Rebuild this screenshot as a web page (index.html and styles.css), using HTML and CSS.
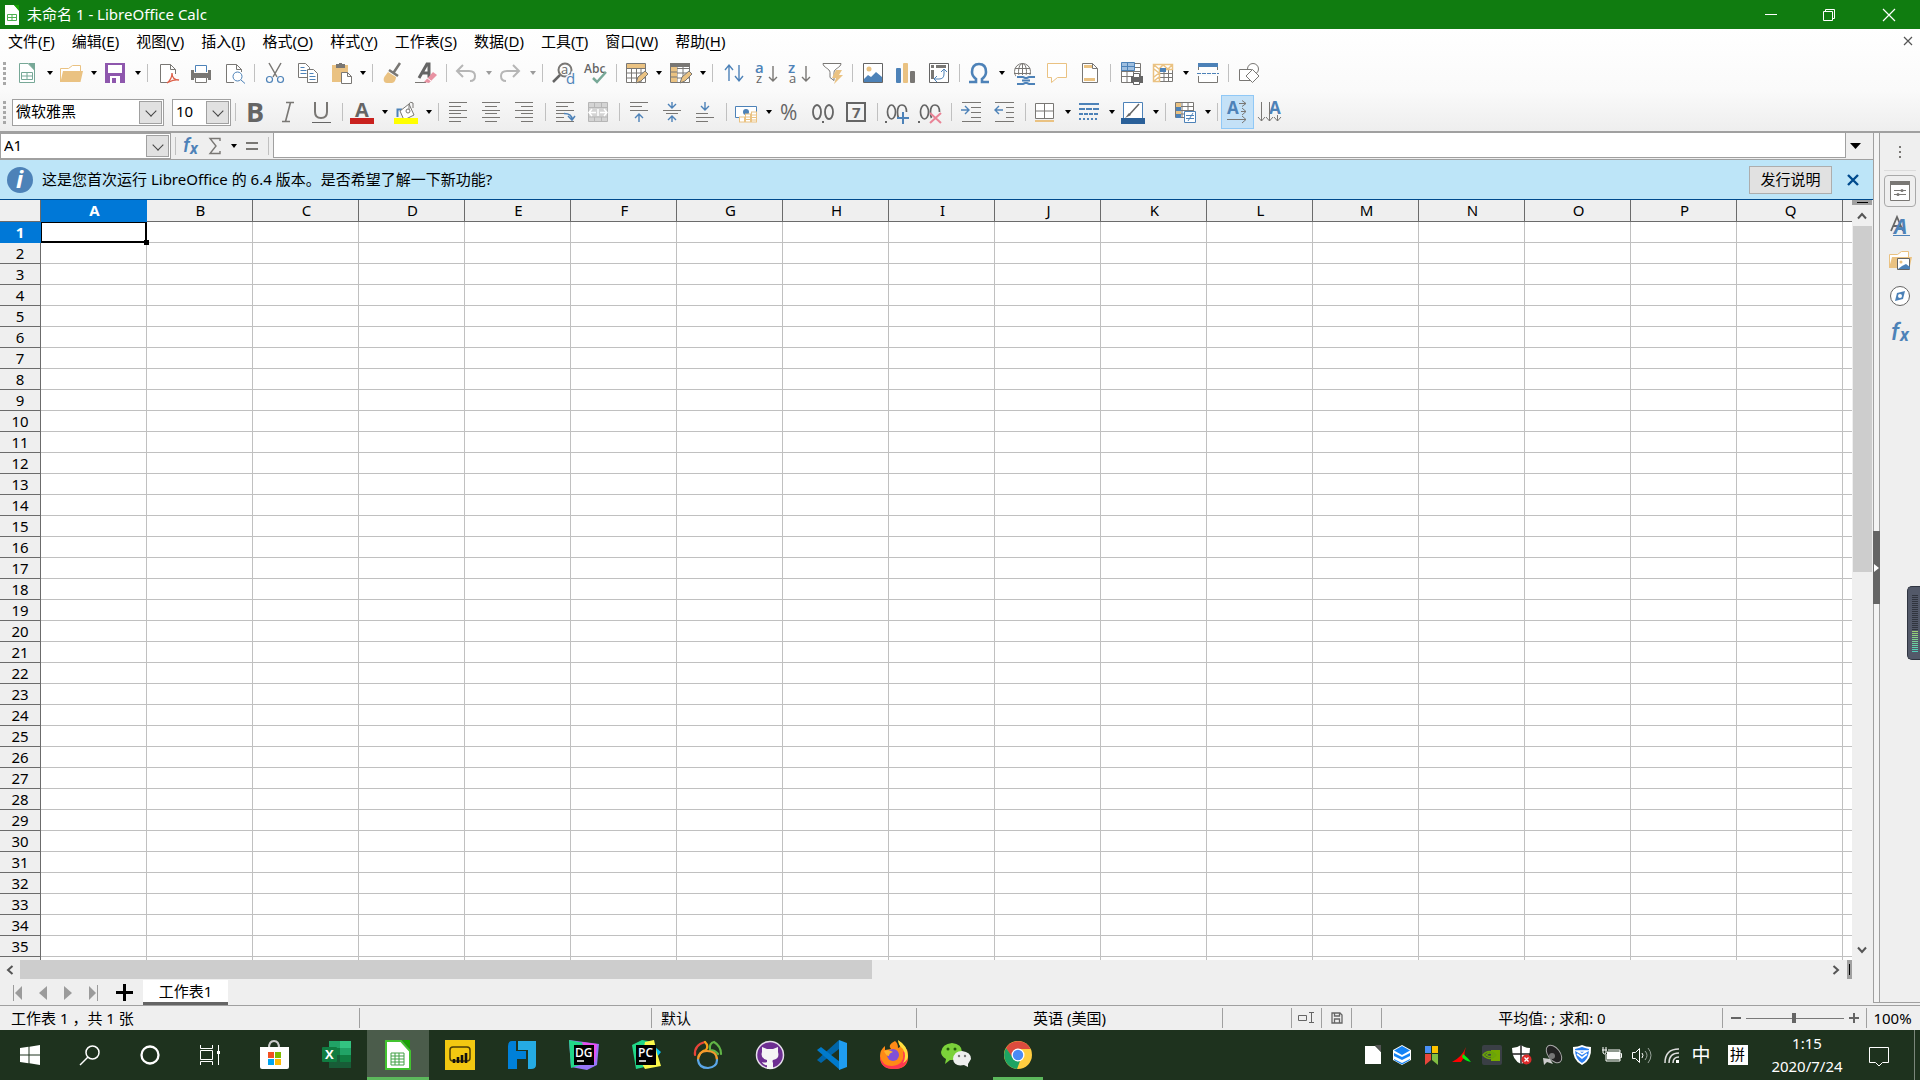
FILE: index.html
```html
<!DOCTYPE html>
<html lang="zh-CN">
<head>
<meta charset="utf-8">
<title>未命名 1 - LibreOffice Calc</title>
<link rel="stylesheet" href="styles.css">
</head>
<body>
<header class="titlebar">
  <svg class="app-icon" width="14" height="20" viewBox="0 0 14 20"><path d="M0 0h9l5 5v15H0z" fill="#fff"/><path d="M9 0h5v6z" fill="#18a303"/><path d="M2.500 9.500h9v6h-9zM2.500 12.500h9M7 9.500v6" stroke="#4caf50" fill="none"/></svg>
  <h1 class="title">未命名 1 - LibreOffice Calc</h1>
  <button class="win" aria-label="最小化"><svg width="12" height="12"><path d="M0 5.500h12" stroke="#fff"/></svg></button>
  <button class="win" aria-label="还原"><svg width="12" height="12"><path d="M.5 2.500h9v9h-9zM2.500 2.500v-2h9v9h-2" stroke="#fff" fill="none"/></svg></button>
  <button class="win" aria-label="关闭"><svg width="12" height="12"><path d="M0 0l12 12M12 0L0 12" stroke="#fff" stroke-width="1.200"/></svg></button>
</header>

<section class="chrome">
  <nav class="menubar">
    <button>文件(<u>F</u>)</button><button>编辑(<u>E</u>)</button><button>视图(<u>V</u>)</button><button>插入(<u>I</u>)</button><button>格式(<u>O</u>)</button><button>样式(<u>Y</u>)</button><button>工作表(<u>S</u>)</button><button>数据(<u>D</u>)</button><button>工具(<u>T</u>)</button><button>窗口(<u>W</u>)</button><button>帮助(<u>H</u>)</button>
    <button class="doc-close" aria-label="关闭文档"><svg width="8" height="8"><path d="M0 0l8 8M8 0L0 8" stroke="#555" stroke-width="1.200"/></svg></button>
  </nav>

  <div class="toolbar" role="toolbar" aria-label="标准">
    <span class="handle"></span>
    <button class="tb" aria-label="新建"><svg viewBox="0 0 24 24"><path d="M4.500 2.500H13l6.500 6.500v12.500h-15z" fill="#fff" stroke="#77a897"/><path d="M13 2h7v8z" fill="#77a897"/><path d="M6.500 11.500h11v7h-11zM6.500 15h11M12 11.500v7" fill="none" stroke="#77a897"/></svg></button><button class="dd" aria-label="新建选项"></button>
    <button class="tb" aria-label="打开"><svg viewBox="0 0 24 24"><path d="M1.500 21V7.500h8l4-3h8V10" fill="#fff" stroke="#eac282"/><path d="M4 10h20l-2.500 11H1.500z" fill="#eac282"/></svg></button><button class="dd" aria-label="打开选项"></button>
    <button class="tb" aria-label="保存"><svg viewBox="0 0 24 24"><path d="M2 2h20v20H2z" fill="#8e57ad"/><path d="M5 4h14v8H5zM7 15h10v7H7z" fill="#fff"/><path d="M9 17h4v5H9z" fill="#8e57ad"/></svg></button><button class="dd" aria-label="保存选项"></button>
    <span class="sep"></span>
    <button class="tb" aria-label="导出为 PDF"><svg viewBox="0 0 24 24"><path d="M13 21.500H5.500v-18h10l5 5V13M15.500 3.500v5h5" fill="#fff" stroke="#797774"/><path d="M12 22c4-3 5-8 5-10 0 4 2 7 7 7-6-1-8 1-12 3z" fill="none" stroke="#dd6049" stroke-width="1.300"/></svg></button>
    <button class="tb" aria-label="打印"><svg viewBox="0 0 24 24"><path d="M7.500 11V4.500h11V11" fill="#fff" stroke="#4d82b8"/><path d="M3 9h3v3h14V9h3v10h-3v-2H6v2H3z" fill="#797774"/><path d="M7.500 16.500h11v5h-11z" fill="#fff" stroke="#797774"/></svg></button>
    <button class="tb" aria-label="打印预览"><svg viewBox="0 0 24 24"><path d="M13 21.500H5.500v-18h10l5 5V11M15.500 3.500v5h5" fill="#fff" stroke="#797774"/><circle cx="16.500" cy="15.500" r="4.500" fill="#fff" stroke="#4d82b8"/><path d="M20 19l4 3.500" stroke="#4d82b8"/></svg></button>
    <span class="sep"></span>
    <button class="tb" aria-label="剪切"><svg viewBox="0 0 24 24"><path d="M7 2l8 14M19 2l-8 14" stroke="#797774" stroke-width="1.500"/><g fill="none" stroke="#4d82b8" stroke-width="1.200"><circle cx="7.500" cy="18.500" r="3"/><circle cx="18.500" cy="18.500" r="3"/></g></svg></button>
    <button class="tb" aria-label="复制"><svg viewBox="0 0 24 24"><g fill="#fff" stroke="#797774"><path d="M3.500 2.500h7l4 4v10h-11z"/><path d="M12.500 8.500h6l4 4v9h-10z"/></g><path d="M5.500 6.500h4M5.500 9.500h6M5.500 12.500h6M14.500 12.500h4M14.500 15.500h6M14.500 18.500h6" stroke="#4d82b8"/></svg></button>
    <button class="tb" aria-label="粘贴"><svg viewBox="0 0 24 24"><path d="M4 4h16v17H4z" fill="#eac282"/><path d="M8 3h3V2h3v1h3v4H8z" fill="#797774"/><path d="M13.500 11.500h6l4 4v7h-10zM19.500 11.500v4h4" fill="#fff" stroke="#797774"/></svg></button><button class="dd" aria-label="粘贴选项"></button>
    <span class="sep"></span>
    <button class="tb" aria-label="克隆格式"><svg viewBox="0 0 24 24"><path d="M20 2l-6 9M9 9l9 6" stroke="#797774" stroke-width="2.500"/><path d="M8 11l8 5c0 3-2 6-4 6H7c-4 0-4-5-2-7z" fill="#eac282"/></svg></button>
    <button class="tb" aria-label="清除格式"><svg viewBox="0 0 24 24"><path d="M6 17L14 3h2v14M8 12h8" fill="none" stroke="#656565" stroke-width="3"/><path d="M2 21.500h11" stroke="#797774"/><path d="M20 11l4 3-8 8-5-1z" fill="#e892a2"/><path d="M13 16l5 4" stroke="#fff"/></svg></button>
    <span class="sep"></span>
    <button class="tb off" aria-label="撤消"><svg viewBox="0 0 24 24"><path d="M9 4l-6 6 6 6M3 10h12q6 0 6 5t-5 5" fill="none" stroke="#b6b6b6" stroke-width="2"/></svg></button><button class="dd off" aria-label="撤消选项"></button>
    <button class="tb off" aria-label="重做"><svg viewBox="0 0 24 24"><path d="M15 4l6 6-6 6M21 10H9q-6 0-6 5t5 5" fill="none" stroke="#b6b6b6" stroke-width="2"/></svg></button><button class="dd off" aria-label="重做选项"></button>
    <span class="sep"></span>
    <button class="tb" aria-label="查找替换"><svg viewBox="0 0 24 24"><circle cx="15" cy="9" r="6.500" fill="none" stroke="#797774" stroke-width="2"/><path d="M10 14l-7 7" stroke="#656565" stroke-width="2.500"/><text x="11" y="13" font-size="13" fill="#656565">a</text><text x="16" y="23" font-size="15" fill="#4d82b8" stroke="#f9f9f9" stroke-width="3" paint-order="stroke">d</text></svg></button>
    <button class="tb" aria-label="拼写检查"><svg viewBox="0 0 24 24"><text x="1" y="12" font-size="12" font-weight="600" fill="#656565">Abc</text><path d="M10 17l4 4 9-10" fill="none" stroke="#77a897" stroke-width="2.500"/></svg></button>
    <span class="sep"></span>
    <button class="tb" aria-label="行"><svg viewBox="0 0 24 24"><path d="M2.500 2.500h19v19h-19zM2.500 7.500h19M2.500 12h19M2.500 17h19M7.500 2v20M12.500 2v20M17 2v20" fill="#fff" stroke="#797774"/><path d="M3 3h18v4H3z" fill="#eac282"/><path d="M12 22l2-6 7-6 3 3-7 7z" fill="#eac282" stroke="#797774"/></svg></button><button class="dd" aria-label="行选项"></button>
    <button class="tb" aria-label="列"><svg viewBox="0 0 24 24"><path d="M2.500 2.500h19v19h-19zM2.500 7.500h19M2.500 12h19M2.500 17h19M9 2v20M15 2v20" fill="#fff" stroke="#797774"/><path d="M2 2h20v4H2z" fill="#797774"/><path d="M3 6h6v15H3z" fill="#eac282"/><path d="M3 11h6M3 16h6" stroke="#797774"/><path d="M12 22l2-6 7-6 3 3-7 7z" fill="#eac282" stroke="#797774"/></svg></button><button class="dd" aria-label="列选项"></button>
    <span class="sep"></span>
    <button class="tb" aria-label="排序"><svg viewBox="0 0 24 24"><path d="M9 20V5M5 9l4-5 4 5M19 4v15M15 15l4 5 4-5" fill="none" stroke="#4d82b8" stroke-width="1.400"/></svg></button>
    <button class="tb" aria-label="升序"><svg viewBox="0 0 24 24"><text x="2" y="12" font-size="15" font-weight="600" fill="#4d82b8">a</text><text x="3" y="22" font-size="13" fill="#656565">z</text><path d="M20 5v15M16 16l4 4 4-4" fill="none" stroke="#797774" stroke-width="1.400"/></svg></button>
    <button class="tb" aria-label="降序"><svg viewBox="0 0 24 24"><text x="2" y="12" font-size="15" font-weight="600" fill="#4d82b8">z</text><text x="3" y="22" font-size="13" fill="#656565">a</text><path d="M20 5v15M16 16l4 4 4-4" fill="none" stroke="#797774" stroke-width="1.400"/></svg></button>
    <button class="tb" aria-label="自动筛选"><svg viewBox="0 0 24 24"><path d="M4 2.500h18c0 4-7 5-7 9v8l-4-3v-5c0-4-7-5-7-9z" fill="#fff" stroke="#797774"/><path d="M17 9h6l-3 5h4l-9 9 2-6h-4z" fill="#eac282"/></svg></button>
    <span class="sep"></span>
    <button class="tb" aria-label="图像"><svg viewBox="0 0 24 24"><path d="M3.500 2.500h19v19h-19z" fill="#fff" stroke="#656565"/><circle cx="9" cy="8" r="2.500" fill="#eac282"/><path d="M4 21v-3l4-4 3 2 5-5 6 5v5z" fill="#4d82b8"/></svg></button>
    <button class="tb" aria-label="图表"><svg viewBox="0 0 24 24"><rect x="3" y="7" width="5" height="15" rx="1" fill="#4d82b8"/><rect x="10" y="2" width="5" height="20" rx="1" fill="#eac282"/><rect x="17" y="10" width="5" height="12" rx="1" fill="#797774"/></svg></button>
    <button class="tb" aria-label="数据透视表"><svg viewBox="0 0 24 24"><path d="M3.500 2.500h19v19h-19z" fill="#fff" stroke="#656565"/><path d="M5 4h3v3H5zM10 4h10v3H10zM5 9h3v9H5z" fill="#797774"/><path d="M18 8l-3 3M18 8l3 3M18 8v5q0 5-5 5H8M8 18l3-3M8 18l3 3" fill="none" stroke="#4d82b8"/></svg></button>
    <span class="sep"></span>
    <button class="tb" aria-label="特殊字符"><svg viewBox="0 0 24 24"><path d="M2 21h7v-3q-4-3-4-7 0-8 7-8t7 8q0 4-4 7v3h7" fill="none" stroke="#4d82b8" stroke-width="2.600"/></svg></button><button class="dd" aria-label="特殊字符选项"></button>
    <button class="tb" aria-label="超链接"><svg viewBox="0 0 24 24"><g fill="#fff" stroke="#797774"><circle cx="11.500" cy="10.500" r="8"/><ellipse cx="11.500" cy="10.500" rx="4" ry="8"/><path d="M11.500 2v17M4 7.500h15M3 12.500h17"/></g><path d="M5 14h20v10H5z" fill="#f9f9f9"/><path d="M6 16h6l2 1h2l2-1h6M11 19.500h8M6 23h6l2-1h2l2 1h6" fill="none" stroke="#4d82b8" stroke-width="2"/></svg></button>
    <button class="tb" aria-label="批注"><svg viewBox="0 0 24 24"><path d="M3.500 2.500h19v14h-9l-6 5v-5h-4z" fill="#fff" stroke="#eac282"/></svg></button>
    <button class="tb" aria-label="页眉和页脚"><svg viewBox="0 0 24 24"><path d="M5.500 2.500h10l5 5v14h-15zM15.500 2.500v5h5" fill="#fff" stroke="#797774"/><path d="M7 4h8v3H7zM7 17h11v3H7z" fill="#eac282"/></svg></button>
    <span class="sep"></span>
    <button class="tb" aria-label="打印区域"><svg viewBox="0 0 24 24"><path d="M3.500 2.500h19v19h-19zM3.500 6.500h19M3.500 10.500h19M3.500 15.500h19M9 2v20M15.500 2v20" fill="#fff" stroke="#797774"/><path d="M3.500 1.500h13v8h-13zM3.500 5.500h13M9.500 1.500v8" fill="#9fbfe0" stroke="#4d82b8"/><path d="M13 15h12v7H13z" fill="#656565"/><path d="M15.500 12.500h6v4h-6zM15.500 20.500h6v3h-6z" fill="#fff" stroke="#656565"/></svg></button>
    <button class="tb" aria-label="冻结行列"><svg viewBox="0 0 24 24"><path d="M2.500 3.500h19v17h-19zM8.500 8.500h13M8.500 12.500h13M8.500 16.500h13M8.500 8v13M13 8v13M17.500 8v13" fill="#fff" stroke="#797774"/><path d="M2.500 8.500V3.500h19v5h-13v12h-6zM3 4l5 4 4-4 5 4 4-4M3 16l5-4M3 20l5-4M3 8l5 4" fill="none" stroke="#eac282" stroke-width="1.500"/><path d="M9 7h6v4H9z" fill="#4d82b8"/></svg></button><button class="dd" aria-label="冻结选项"></button>
    <button class="tb" aria-label="拆分窗口"><svg viewBox="0 0 24 24"><path d="M3.500 9V3.500h19V9M3.500 15v6.500h19V15" fill="#fff" stroke="#797774"/><path d="M3 2h20v4H3z" fill="#4d82b8"/><path d="M2 12.500h22" stroke="#4d82b8" stroke-dasharray="4 1"/></svg></button>
    <span class="sep"></span>
    <button class="tb" aria-label="绘图功能"><svg viewBox="0 0 24 24"><g fill="#fff" stroke="#797774"><circle cx="17" cy="8" r="5.500"/><path d="M3.500 8.500h12v11h-12z"/><path d="M16.500 8.500l6.500 6.500-6.500 6.500-6.500-6.500z"/></g></svg></button>
  </div>

  <div class="toolbar format" role="toolbar" aria-label="格式">
    <span class="handle"></span>
    <span class="combo font"><select aria-label="字体名称"><option>微软雅黑</option></select></span>
    <span class="combo size"><select aria-label="字号"><option>10</option></select></span>
    <span class="sep"></span>
    <button class="tb" aria-label="粗体"><svg viewBox="0 0 24 24"><text x="3" y="22" font-size="27" font-weight="700" fill="#656565">B</text></svg></button>
    <button class="tb" aria-label="斜体"><svg viewBox="0 0 24 24"><path d="M10 2.500h8M6 21.500h8M14.500 2.500l-5 19" stroke="#797774" stroke-width="1.600"/></svg></button>
    <button class="tb" aria-label="下划线"><svg viewBox="0 0 24 24"><path d="M6 2v10q0 6 6 6t6-6V2" fill="none" stroke="#797774" stroke-width="2"/><path d="M3 22.500h19" stroke="#656565"/></svg></button>
    <span class="sep"></span>
    <button class="tb" aria-label="字体颜色"><svg viewBox="0 0 24 24"><text x="5" y="17" font-size="20" font-weight="700" fill="#656565">A</text><path d="M0 18h24v6H0z" fill="#c9211e"/></svg></button><button class="dd" aria-label="字体颜色选项"></button>
    <button class="tb" aria-label="突出显示颜色"><svg viewBox="0 0 24 24"><path d="M3.500 17V9.500H8" stroke="#4d82b8" stroke-width="2" fill="none"/><path d="M6 11l9-7 5 11-10 5z" fill="#fff" stroke="#797774"/><path d="M15 10V4q1-3 4-1v5" fill="none" stroke="#797774"/><circle cx="14" cy="11" r="2" fill="#fff" stroke="#797774"/><path d="M0 18h24v6H0z" fill="#ff0"/></svg></button><button class="dd" aria-label="突出显示选项"></button>
    <span class="sep"></span>
    <button class="tb" aria-label="左对齐"><svg viewBox="0 0 24 24"><path d="M3 2.500h18M3 6.500h12M3 10.500h18M3 13.500h12M3 17.500h18M3 21.500h12" stroke="#797774"/></svg></button>
    <button class="tb" aria-label="居中对齐"><svg viewBox="0 0 24 24"><path d="M3 2.500h18M6 6.500h12M3 10.500h18M6 13.500h12M3 17.500h18M6 21.500h12" stroke="#797774"/></svg></button>
    <button class="tb" aria-label="右对齐"><svg viewBox="0 0 24 24"><path d="M3 2.500h18M9 6.500h12M3 10.500h18M9 13.500h12M3 17.500h18M9 21.500h12" stroke="#797774"/></svg></button>
    <span class="sep"></span>
    <button class="tb" aria-label="自动换行"><svg viewBox="0 0 24 24"><path d="M3 2.500h18M3 6.500h12M3 10.500h18M3 13.500h8M3 17.500h8M3 21.500h18" stroke="#797774"/><path d="M11 13.500q8 0 8 6M15 16l4 4 3-4" fill="none" stroke="#4d82b8" stroke-width="1.500"/></svg></button>
    <button class="tb off" aria-label="合并单元格"><svg viewBox="0 0 24 24"><path d="M2.500 2.500h19v19h-19zM2.500 7.500h19M2.500 17h19M8.500 2v6M15.500 2v6M8.500 17v5M15.500 17v5" fill="#d4d4d4" stroke="#b6b6b6"/><path d="M6 9l-3 3.500L6 16M18 9l3 3.500-3 3.500M3 12.500h7M14 12.500h7M12 9v7" fill="none" stroke="#fff" stroke-width="1.500"/></svg></button>
    <span class="sep"></span>
    <button class="tb" aria-label="顶端对齐"><svg viewBox="0 0 24 24"><path d="M3 2.500h18M3 6.500h12M3 10.500h18" stroke="#797774"/><path d="M12 22v-8M8 18l4-4 4 4" fill="none" stroke="#4d82b8" stroke-width="1.400"/></svg></button>
    <button class="tb" aria-label="垂直居中"><svg viewBox="0 0 24 24"><path d="M3 10.500h18M6 13.500h12" stroke="#797774"/><path d="M12 2v6M8 4l4 4 4-4M12 22v-5M8 20l4-4 4 4" fill="none" stroke="#4d82b8" stroke-width="1.400"/></svg></button>
    <button class="tb" aria-label="底端对齐"><svg viewBox="0 0 24 24"><path d="M3 13.500h12M3 17.500h18M3 21.500h12" stroke="#797774"/><path d="M12 2v8M8 6l4 4 4-4" fill="none" stroke="#4d82b8" stroke-width="1.400"/></svg></button>
    <span class="sep"></span>
    <button class="tb" aria-label="货币格式"><svg viewBox="0 0 24 24"><path d="M1.500 6.500h21v11h-21z" fill="#fff" stroke="#4d82b8"/><circle cx="12" cy="12" r="3" fill="#4d82b8"/><g fill="#fff" stroke="#eac282"><rect x="5.500" y="17" width="5" height="5"/><rect x="11.500" y="14" width="5" height="8"/><rect x="17.500" y="12" width="5" height="10"/></g><path d="M12 17h4M12 19.500h4M18 15h4M18 17.500h4M18 20h4" stroke="#eac282"/></svg></button><button class="dd" aria-label="货币选项"></button>
    <button class="tb" aria-label="百分比格式"><svg viewBox="0 0 24 24"><text x="2" y="20" font-size="21" fill="#656565">%</text></svg></button>
    <button class="tb" aria-label="数字格式"><svg viewBox="0 0 24 24"><g fill="none" stroke="#656565" stroke-width="1.800"><ellipse cx="6" cy="12" rx="4" ry="7"/><ellipse cx="18" cy="12" rx="4" ry="7"/></g><path d="M11 21h2v2h-2z" fill="#656565"/></svg></button>
    <button class="tb" aria-label="日期格式"><svg viewBox="0 0 24 24"><path d="M3 3h18v18H3z" fill="none" stroke="#656565" stroke-width="2"/><text x="8" y="18" font-size="15" font-weight="700" fill="#656565">7</text></svg></button>
    <span class="sep"></span>
    <button class="tb" aria-label="增加小数位"><svg viewBox="0 0 24 24"><g fill="none" stroke="#656565" stroke-width="1.700"><ellipse cx="6.500" cy="12" rx="4" ry="7"/><path d="M13.500 18q-1-2-1-6 0-7 4.500-7t4.500 7"/></g><path d="M0 21h2v2H0z" fill="#656565"/><path d="M18 12v12M12 18h12" stroke="#4d82b8" stroke-width="2"/></svg></button>
    <button class="tb" aria-label="减少小数位"><svg viewBox="0 0 24 24"><g fill="none" stroke="#656565" stroke-width="1.700"><ellipse cx="6.500" cy="12" rx="4" ry="7"/><path d="M13.500 18q-1-2-1-6 0-7 4.500-7t4.500 7"/></g><path d="M0 21h2v2H0z" fill="#656565"/><path d="M12 13l11 10M23 13L12 23" stroke="#e98396" stroke-width="2"/></svg></button>
    <span class="sep"></span>
    <button class="tb" aria-label="增加缩进"><svg viewBox="0 0 24 24"><path d="M3 2.500h19M12 7.500h10M12 12.500h10M12 17.500h10M3 21.500h19" stroke="#797774"/><path d="M2 10h8M6 6l4 4-4 4" fill="none" stroke="#4d82b8" stroke-width="1.400"/></svg></button>
    <button class="tb" aria-label="减少缩进"><svg viewBox="0 0 24 24"><path d="M3 2.500h19M14 7.500h8M14 12.500h8M14 17.500h8M3 21.500h19" stroke="#797774"/><path d="M11 10H3M7 6l-4 4 4 4" fill="none" stroke="#4d82b8" stroke-width="1.400"/></svg></button>
    <span class="sep"></span>
    <button class="tb" aria-label="边框"><svg viewBox="0 0 24 24"><path d="M2.500 3.500h18v15h-18zM2.500 11h18M11.500 3.500v15" fill="#fff" stroke="#797774"/><path d="M2 20h19v2H2z" fill="#eac282"/></svg></button><button class="dd" aria-label="边框选项"></button>
    <button class="tb" aria-label="边框样式"><svg viewBox="0 0 24 24"><path d="M2 4h20" stroke="#4d82b8" stroke-width="2"/><path d="M2 9h20" stroke="#4d82b8" stroke-width="2" stroke-dasharray="6 1"/><path d="M2 14h20" stroke="#4d82b8" stroke-width="2" stroke-dasharray="4 1"/><path d="M2 19h20" stroke="#4d82b8" stroke-width="2" stroke-dasharray="2 2"/></svg></button><button class="dd" aria-label="边框样式选项"></button>
    <button class="tb" aria-label="边框颜色"><svg viewBox="0 0 24 24"><path d="M2.500 2.500h19v17h-19z" fill="#fff" stroke="#4d82b8"/><path d="M18 4L8 15" stroke="#656565" stroke-width="1.500"/><path d="M8 13l2 2-6 3z" fill="#656565"/><path d="M0 18h24v6H0z" fill="#2a6099"/></svg></button><button class="dd" aria-label="边框颜色选项"></button>
    <span class="sep"></span>
    <button class="tb" aria-label="条件格式"><svg viewBox="0 0 24 24"><path d="M2.500 2.500h18v15h-18zM2.500 6.500h18M2.500 10.500h18M2.500 14h18M9 2v16M15 2v16" fill="#fff" stroke="#797774"/><path d="M3 3h5v4H3zM3 11h5v3H3z" fill="#eac282"/><path d="M3 7h5v4H3zM3 14h5v4H3z" fill="#4d82b8"/><path d="M11.500 11.500h11v11h-11z" fill="#fff" stroke="#4d82b8"/><path d="M13 15.500h8M13 18.500h8M20 13l-5 8" stroke="#4d82b8"/></svg></button><button class="dd" aria-label="条件格式选项"></button>
    <span class="sep"></span>
    <button class="tb on" aria-label="从左到右"><svg viewBox="0 0 24 24"><text x="2" y="14" font-size="17" font-weight="700" fill="#4d82b8">A</text><path d="M14 3.500h7M17 .500l4 3-4 3M16 11.500h5M17 8l4 3.500-4 3.500M2 19.500h19M17 16l4 3.500-4 3.500" fill="none" stroke="#797774"/></svg></button>
    <button class="tb" aria-label="从上到下"><svg viewBox="0 0 24 24"><text x="11" y="14" font-size="17" font-weight="700" fill="#4d82b8">A</text><path d="M3.500 2v19M0 17l3.500 4L7 17M11.500 2v19M8 17l3.500 4 3.500-4M19.500 15v6M16 17l3.500 4 3.500-4" fill="none" stroke="#797774"/></svg></button>
  </div>
</section>

<main class="workspace">
  <section class="editor">
    <div class="formulabar">
      <div class="combo namebox"><input aria-label="名称框" value="A1"></div>
      <span class="sep"></span>
      <button class="fb fx" aria-label="函数向导"><svg viewBox="0 0 24 24"><text x="4" y="18" font-size="20" font-style="italic" font-weight="500">f</text><text x="11" y="20" font-size="16" font-style="italic" font-weight="700">x</text></svg></button>
      <button class="fb" aria-label="选择函数"><svg viewBox="0 0 24 24"><path d="M17 7V4.500H7l6 7.500-6 7.500h10V17" fill="none" stroke="#797774" stroke-width="1.400"/></svg></button><button class="dd" aria-label="函数选项"></button>
      <button class="fb" aria-label="公式"><svg viewBox="0 0 24 24"><path d="M6 9h12M6 15h12" stroke="#797774" stroke-width="2"/></svg></button>
      <span class="sep"></span>
      <input class="formula" aria-label="输入行">
      <button class="expand" aria-label="展开编辑栏"><svg width="12" height="6"><path d="M0 0h11l-5.500 6z"/></svg></button>
    </div>
    <div class="infobar">
      <svg width="26" height="26" viewBox="0 0 26 26"><circle cx="13" cy="13" r="13" fill="#4d82b8"/><text x="9" y="21" font-family="Liberation Serif, serif" font-size="24" font-style="italic" font-weight="700" fill="#fff">i</text></svg>
      <p>这是您首次运行 LibreOffice 的 6.4 版本。是否希望了解一下新功能?</p>
      <button class="notes">发行说明</button>
      <button class="dismiss" aria-label="关闭提示"><svg width="10" height="10"><path d="M0 0l10 10M10 0L0 10" stroke="#004a8d" stroke-width="2.400"/></svg></button>
    </div>
    <div class="gridarea">
      <div class="cells"><table class="grid" aria-label="工作表1"><thead></thead><tbody></tbody></table></div>
      <div class="vscroll">
        <span class="vsplit"></span>
        <button aria-label="向上滚动"><svg width="10" height="8"><path d="M1 6.500l4-4.500 4 4.500" fill="none" stroke="#555" stroke-width="2"/></svg></button>
        <div class="vtrack"><span></span></div>
        <button aria-label="向下滚动"><svg width="10" height="8"><path d="M1 1.500L5 6l4-4.500" fill="none" stroke="#555" stroke-width="2"/></svg></button>
      </div>
    </div>
    <div class="hscroll">
      <button aria-label="向左滚动"><svg width="8" height="10"><path d="M6.500 1L2 5l4.500 4" fill="none" stroke="#555" stroke-width="2"/></svg></button>
      <div class="htrack"><span></span></div>
      <button aria-label="向右滚动"><svg width="8" height="10"><path d="M1.500 1L6 5 1.500 9" fill="none" stroke="#555" stroke-width="2"/></svg></button>
      <span class="hsplit"></span>
    </div>
    <div class="tabs">
      <button class="nav" aria-label="第一张"><svg width="10" height="16"><path d="M.5 0v16" stroke="#9b9b9b"/><path d="M9 1v14L2 8z" fill="#9b9b9b"/></svg></button>
      <button class="nav" aria-label="上一张"><svg width="10" height="16"><path d="M9 1v14L1 8z" fill="#9b9b9b"/></svg></button>
      <button class="nav" aria-label="下一张"><svg width="10" height="16"><path d="M1 1v14l8-7z" fill="#9b9b9b"/></svg></button>
      <button class="nav" aria-label="最后一张"><svg width="10" height="16"><path d="M9.500 0v16" stroke="#9b9b9b"/><path d="M1 1v14l7-7z" fill="#9b9b9b"/></svg></button>
      <button class="add" aria-label="添加工作表"><svg width="17" height="17"><path d="M8.500 0v17M0 8.500h17" stroke="#000" stroke-width="3"/></svg></button>
      <button class="tab">工作表1</button>
    </div>
  </section>
  <button class="collapse" aria-label="隐藏侧边栏"><span><svg width="6" height="8"><path d="M1 0v8l5-4z" fill="#fff"/></svg></span></button>
  <aside class="sidebar">
    <button aria-label="侧边栏设置" class="more"><svg viewBox="0 0 24 24"><path d="M11 6h2v2h-2zM11 11h2v2h-2zM11 16h2v2h-2z" fill="#797774"/></svg></button>
    <button aria-label="属性" class="cur"><svg viewBox="0 0 24 24"><path d="M2.500 2.500h19v19h-19z" fill="#fff" stroke="#797774"/><path d="M2 2h20v4H2z" fill="#797774"/><path d="M6 11.500h12M6 15.500h12" stroke="#797774"/><circle cx="14" cy="11.500" r="1.500" fill="#797774"/><circle cx="10" cy="15.500" r="1.500" fill="#797774"/></svg></button>
    <button aria-label="样式"><svg viewBox="0 0 24 24"><path d="M3 17L9 3l6 14M5 12h8" fill="none" stroke="#656565" stroke-width="1.800"/><text x="6" y="20" font-size="21" font-style="italic" font-weight="700" fill="#4d82b8">A</text><path d="M5 21.500h17" stroke="#4d82b8"/></svg></button>
    <button aria-label="图库"><svg viewBox="0 0 24 24"><path d="M1.500 19V5.500h8l4-3h7V8" fill="#fff" stroke="#eac282"/><path d="M4 8h20l-2.500 11H1z" fill="#eac282"/><path d="M9.500 9.500h12v11h-12z" fill="#fff" stroke="#656565"/><circle cx="13" cy="13" r="1.500" fill="#eac282"/><path d="M10 20l4-3 4-2 4 3v2z" fill="#4d82b8"/></svg></button>
    <button aria-label="导航"><svg viewBox="0 0 24 24"><circle cx="12" cy="12" r="9.500" fill="#fff" stroke="#656565"/><path d="M17 7l-2 8-8 2 2-8z" fill="#4d82b8"/><circle cx="12" cy="12" r="2" fill="#fff"/></svg></button>
    <button aria-label="函数" class="fx"><svg viewBox="0 0 24 24"><text x="3" y="21" font-size="24" font-style="italic" font-weight="500">f</text><text x="12" y="22" font-size="18" font-style="italic" font-weight="700">x</text></svg></button>
  </aside>
</main>

<div class="gadget" aria-hidden="true"><span></span></div>

<footer class="status">
  <span class="s-sheet">工作表 1 ，共 1 张</span>
  <span class="s-sel"></span>
  <span class="s-style">默认</span>
  <span class="s-lang">英语 (美国)</span>
  <span class="s-blank"></span>
  <span class="s-ico"><svg width="18" height="12"><path d="M.5 3.500h8v5h-8zM11 .5h5M13.500 .5v10M11 10.500h5" fill="none" stroke="#656565"/></svg></span>
  <span class="s-ico"><svg width="12" height="12"><path d="M1 1h8l2 2v8H1zM3.500 1v3h5V1M3.500 11V7h5v4" fill="none" stroke="#656565" stroke-width="1.300"/></svg></span>
  <span class="s-ico"></span>
  <span class="s-sum">平均值: ; 求和: 0</span>
  <span class="s-zoom"><button aria-label="缩小"><svg width="10" height="10"><path d="M0 5h10" stroke="#656565" stroke-width="2"/></svg></button><input type="range" aria-label="显示比例" min="0" max="100" value="49"><button aria-label="放大"><svg width="10" height="10"><path d="M0 5h10M5 0v10" stroke="#656565" stroke-width="2"/></svg></button></span>
  <span class="s-pct">100%</span>
</footer>

<nav class="taskbar">
  <button class="sys" aria-label="开始"><svg width="20" height="20"><path d="M0 3l8.500-1.200V9.500H0zM9.500 1.700L20 0v9.500H9.500zM0 10.500h8.500v7.700L0 17zM9.500 10.500H20V20l-10.500-1.700z" fill="#fff"/></svg></button>
  <button class="sys" aria-label="搜索"><svg width="20" height="20"><circle cx="12.500" cy="7.500" r="6.500" fill="none" stroke="#fff" stroke-width="1.500"/><path d="M8 12l-8 8" stroke="#fff" stroke-width="1.500"/></svg></button>
  <button class="sys" aria-label="Cortana"><svg width="20" height="20"><circle cx="10" cy="10" r="8.500" fill="none" stroke="#fff" stroke-width="2.300"/></svg></button>
  <button class="sys" aria-label="任务视图"><svg width="20" height="20"><path d="M.5 0v3.500h12V0M.5 5.500h12v9H.5zM.5 20v-3.500h12V20M18.500 0v20" fill="none" stroke="#fff"/><path d="M17 6h3v3h-3z" fill="#fff"/></svg></button>
  <div class="apps">
    <button aria-label="应用商店"><svg viewBox="0 0 30 30"><path d="M10 8q0-7 5-7t5 7" fill="none" stroke="#ccc" stroke-width="2"/><path d="M1 7h29v20q0 2-2 2H3q-2 0-2-2z" fill="#fff"/><path d="M9 12h6v6H9z" fill="#f25022"/><path d="M16 12h6v6h-6z" fill="#7fba00"/><path d="M9 19h6v6H9z" fill="#00a4ef"/><path d="M16 19h6v6h-6z" fill="#ffb900"/></svg></button>
    <button aria-label="Excel"><svg viewBox="0 0 30 30"><path d="M8 1h11v7H8z" fill="#21a366"/><path d="M19 1h11v7H19z" fill="#33c481"/><path d="M8 8h11v7H8z" fill="#107c41"/><path d="M19 8h11v7H19z" fill="#21a366"/><path d="M8 15h11v7H8z" fill="#185c37"/><path d="M19 15h11v7H19z" fill="#107c41"/><path d="M8 22h22v6H8z" fill="#185c37"/><rect x="1" y="7" width="15" height="15" rx="1" fill="#107c41"/><text x="4" y="19" font-size="13" font-weight="700" fill="#fff">X</text></svg></button>
    <button class="active" aria-label="LibreOffice Calc"><svg viewBox="0 0 30 30"><path d="M4 1h14l9 10v18H3V1z" fill="#fff" stroke="#43c330" stroke-width="2"/><path d="M19 0h8v9z" fill="#18a303"/><path d="M8 13h13v12H8zM8 16h13M8 19h13M8 22h13M12 13v12M16 13v12" fill="none" stroke="#43a047"/></svg></button>
    <button aria-label="Power BI"><svg viewBox="0 0 30 30"><path d="M0 0h30v30H0z" fill="#f2c811"/><rect x="5" y="7" width="20" height="14" rx="3" fill="none" stroke="#4b3d05" stroke-width="1.500"/><path d="M9 19v4M13 17v6M17 15v8M21 13v10" stroke="#111" stroke-width="2.600"/></svg></button>
    <button aria-label="FA"><svg viewBox="0 0 30 30"><path d="M5 1h4v10h10v8h-9v10H1V6q0-5 4-5z" fill="#0080d8"/><path d="M11 1h18v24q0 4-5 4h-3V10H11z" fill="#25abe3"/></svg></button>
    <button aria-label="DataGrip"><svg viewBox="0 0 30 30"><path d="M0 0l30 4-2 21-10 5-16-3z" fill="#9775f8"/><path d="M0 0l15 3-4 22-9 3z" fill="#21d789"/><path d="M13 2l15 2-2 18h-8z" fill="#ff45ed" opacity=".8"/><path d="M5 5h20v20H5z"/><text x="6" y="17" font-size="12" font-weight="600" fill="#fff">DG</text><path d="M8 21h7" stroke="#fff" stroke-width="1.500"/></svg></button>
    <button aria-label="PyCharm"><svg viewBox="0 0 30 30"><path d="M1 5L11 0l12 2-5 24-13 3z" fill="#21d789"/><path d="M23 6l7 6-4 5z" fill="#07c3f2"/><path d="M14 2l9-2 3 13 4 13-16 3-4-7z" fill="#fcf84a"/><path d="M5 5h20v20H5z"/><text x="7" y="17" font-size="12" font-weight="600" fill="#fff">PC</text><path d="M8 21h7" stroke="#fff" stroke-width="1.500"/></svg></button>
    <button aria-label="Navicat"><svg viewBox="0 0 30 30"><g fill="none" stroke-width="2.200" stroke-linecap="round"><path d="M2 15Q1 5 12 2" stroke="#e8443a"/><path d="M12 2q4 4 1 8-5 1-7 6" stroke="#f6a01a"/><path d="M17 10q-1-7 4-8 7 4 7 12M17 10q5 0 8 4" stroke="#61b446"/><path d="M5 20q0-9 9-9 10 0 10 9" stroke="#f29a2e"/><path d="M5 20q1 8 10 8 9-1 9-8" stroke="#5ba7e8"/></g></svg></button>
    <button aria-label="GitHub"><svg viewBox="0 0 30 30"><circle cx="15" cy="15" r="13.500" fill="#6e2f92" stroke="#e6dfeb" stroke-width="1.500"/><path d="M7 7l5 2h6l5-2v5q2 7-5 8-1 1 0 3v6h-6v-4q-3 1-5-3 3 1 5 0v-2q-7-2-5-8z" fill="#f5f5f5"/></svg></button>
    <button aria-label="VS Code"><svg viewBox="0 0 30 30"><path d="M22 0v9L4 23l-4-3z" fill="#0065a9"/><path d="M0 10l4-3 19 15v8z" fill="#007acc"/><path d="M22 0l8 3v24l-8 3z" fill="#1f9cf0"/></svg></button>
    <button aria-label="Firefox"><svg viewBox="0 0 30 30"><path d="M16 1q3 2 3 7 3-1 2-4 8 5 8 13 0 12-14 12Q1 29 1 16q0-6 5-10v4l6-1q-4-4 4-8z" fill="#ff8a16"/><path d="M1 16q2 10 12 10 13-1 11-14l4-3q4 20-13 20Q1 29 1 16z" fill="#ff3750"/><path d="M19 0q0 5 5 9 4 7 0 14 5-3 5-7Q29 6 19 0z" fill="#ffde3e"/><circle cx="14" cy="15" r="6" fill="#8050d8"/><path d="M5 11q5-2 9 1-4 1-4 4-3 0-5-5z" fill="#ffb32c"/></svg></button>
    <button aria-label="微信"><svg viewBox="0 0 30 30"><path d="M4 24l1-5Q0 16 0 12q1-8 11-9 10 1 10 9t-10 8H9z" fill="#7bd13a"/><circle cx="7" cy="9" r="1.500" fill="#245c0c"/><circle cx="14" cy="9" r="1.500" fill="#245c0c"/><path d="M27 27l-4-2q-10 2-11-6 1-8 9-8 9 1 9 8l-3 5z" fill="#eee"/><circle cx="18" cy="16" r="1.200" fill="#777"/><circle cx="24" cy="16" r="1.200" fill="#777"/></svg></button>
    <button class="running" aria-label="Chrome"><svg viewBox="0 0 30 30"><circle cx="15" cy="15" r="14" fill="#ffcd40"/><path d="M3 8a14 14 0 0 1 24.500 1H15L9 18z" fill="#dd4b3e"/><path d="M3 8l7 10 7 3-3 8A14 14 0 0 1 3 8z" fill="#1da362"/><circle cx="15" cy="15" r="6.500" fill="#fff"/><circle cx="15" cy="15" r="5.200" fill="#4a8af4"/></svg></button>
  </div>
  <div class="tray">
    <button aria-label="LibreOffice 快速启动"><svg viewBox="0 0 20 20"><path d="M3 1h10l6 6v12H3z" fill="#fff"/><path d="M13 0h6v7z" fill="#555"/></svg></button>
    <button aria-label="云盘"><svg viewBox="0 0 20 20"><path d="M10 0l9 5v10l-9 5-9-5V5z" fill="#fff"/><path d="M10 1l8 4.500-8 4.500-8-4.500z" fill="#1683f5"/><path d="M2 8l8 4 8-4v3l-8 4-8-4zM2 14l8 4 8-4v1l-8 4.500L2 15z" fill="#1683f5"/></svg></button>
    <button aria-label="书签"><svg viewBox="0 0 20 20"><path d="M3 1h6v7H3z" fill="#4a90f5"/><path d="M10 1h6v7h-6z" fill="#fcc200"/><path d="M3 9h6v6l-6 5z" fill="#e8463c"/><path d="M10 9h6v11l-6-5z" fill="#80bd42"/></svg></button>
    <button aria-label="驱动"><svg viewBox="0 0 20 20"><path d="M14 2q-3 8 0 11l-3 1-2 3H0q10-5 14-15z" fill="#f00"/><path d="M11 9q4 3 8 8-6-1-9-5z" fill="#0e1"/></svg></button>
    <button aria-label="NVIDIA"><svg viewBox="0 0 20 20"><rect width="20" height="20" rx="2" fill="#3a3f45"/><path d="M9 5h9v11H9z" fill="#76a900"/><path d="M1 10q6-7 13 0-6 7-13 0zM4 10q4-4 7 0-3 3-7 0z" fill="none" stroke="#6aa30a" stroke-width="1.500"/></svg></button>
    <button aria-label="安全中心"><svg viewBox="0 0 20 20"><path d="M9 0q4 3 9 3 0 12-9 16Q0 15 0 3q5 0 9-3z" fill="#fff"/><path d="M9 0v19M0 9h18" stroke="#222" stroke-width="1.500"/><circle cx="14.500" cy="14.500" r="5" fill="#db2b2b"/><path d="M12.500 12.500l4 4M16.500 12.500l-4 4" stroke="#fff" stroke-width="1.300"/></svg></button>
    <button aria-label="音频"><svg viewBox="0 0 20 20"><ellipse cx="12" cy="9" rx="6" ry="10" transform="rotate(-38 12 9)" fill="#222" stroke="#aaa"/><circle cx="10" cy="11" r="3" fill="#777"/><path d="M1 13l7 1 3 5-6-2-3 3z" fill="#ccc"/></svg></button>
    <button aria-label="电脑管家"><svg viewBox="0 0 20 20"><path d="M10 0q4 2 9 2 1 13-9 18Q0 15 1 2q5 0 9-2z" fill="#fff"/><path d="M10 2q3 1 7 2 0 10-7 14Q3 14 3 4q4-1 7-2z" fill="#2b7ff2"/><path d="M5 6h10l-5 3zM5 9l5 4 5-4" fill="none" stroke="#fff" stroke-width="1.700"/></svg></button>
    <button aria-label="电池"><svg viewBox="0 0 20 20"><path d="M5 6.500h13v8H5z" fill="#fff"/><path d="M6 5h12v11H4V9M0 5h5M1 5v3l1.500 1L4 8V5M1 2v3M4 2v3M18.500 8.500h1v4h-1" fill="none" stroke="#fff"/></svg></button>
    <button aria-label="音量"><svg viewBox="0 0 20 20"><path d="M.5 7.500h3l4-4v14l-4-4h-3z" fill="none" stroke="#fff"/><path d="M10 8q2 2 0 5" fill="none" stroke="#fff"/><path d="M13 6q4 4 0 9M16 3q6 7 0 15" fill="none" stroke="#9aa59c"/></svg></button>
    <button aria-label="网络"><svg viewBox="0 0 20 20"><path d="M3 18Q3 4 17 4M7 18q0-10 10-10M11 18q0-6 6-6" fill="none" stroke="#ddd" stroke-width="1.500"/><path d="M14 15h3v3h-3z" fill="#fff"/></svg></button>
    <button class="ime">中</button>
    <button class="pin"><span>拼</span></button>
    <button class="clock"><span>1:15</span><span>2020/7/24</span></button>
    <button class="note" aria-label="通知"><svg viewBox="0 0 20 20"><path d="M.5 1.500h19v15h-6L10 20l-3.500-3.500h-6z" fill="none" stroke="#fff"/></svg></button>
    <span class="peek"></span>
  </div>
</nav>
<script src="script.js"></script>
</body>
</html>
```
FILE: styles.css
```css
* { box-sizing: border-box; }
body {
  margin: 0;
  height: 100vh;
  display: flex;
  flex-direction: column;
  overflow: hidden;
  position: relative;
  background: #efefef;
  color: #000;
  font: 15px/20px "Noto Sans", "Noto Sans CJK SC", sans-serif;
}
button, input, select { font: inherit; color: inherit; margin: 0; padding: 0; border: 0; background: none; border-radius: 0; outline: 0; }
button { flex: none; display: flex; align-items: center; justify-content: center; }
svg { display: block; flex: none; overflow: visible; }
svg text { font-family: "Open Sans", sans-serif; }

.titlebar { flex: none; height: 29px; display: flex; align-items: center; background: #107c10; color: #fff; padding-left: 5px; }
.title { flex: 1; margin: 0 0 0 8px; padding-bottom: 2px; font-size: 15px; font-weight: 400; }
.win { width: 58px; height: 29px; }
.win:last-child { width: 62px; }

.chrome { flex: none; background: linear-gradient(#fff, #fafafa 60%, #eee); border-bottom: 2px solid #a0a0a0; padding-bottom: 2px; }
.menubar { display: flex; align-items: flex-start; height: 27px; padding-left: 8px; gap: 17px; }
.menubar button { height: 24px; }
.menubar u { text-underline-offset: 3px; }
.menubar .doc-close { margin-left: auto; margin-right: 8px; }
.toolbar { display: flex; align-items: center; height: 34px; }
.format { margin-top: 5px; }
.handle { flex: none; width: 3px; height: 23px; margin: 0 5px 0 3px; background: repeating-linear-gradient(#a8a8a8 0 3px, transparent 3px 5px); }
.tb { width: 33px; height: 34px; justify-content: flex-start; padding-left: 4px; }
.tb svg, .fb svg, .sidebar svg { width: 24px; height: 24px; }
.on { background: #c4e1f7; border: 1px solid #90c8f6; padding-left: 3px; }
.dd { width: 11px; height: 34px; }
.dd::after { content: ""; border: solid transparent; border-width: 4px 3px 0; border-top-color: #000; }
.dd.off::after { border-top-color: #9b9b9b; }
.sep { flex: none; width: 1px; height: 18px; margin: 0 3px 0 4px; background: #c0c0c0; }

.combo { flex: none; display: flex; position: relative; background: #fff; border: 1px solid #a0a0a0; height: 27px; }
.combo select, .combo input { flex: 1; min-width: 0; appearance: none; padding: 0 0 2px 3px; }
.combo::after {
  content: ""; position: absolute; right: 1px; top: 1px; bottom: 1px; width: 21px; pointer-events: none;
  border: 1px solid #a0a0a0;
  background: #e1e1e1;
}
.combo::before {
  content: ""; position: absolute; z-index: 1; right: 8px; top: 7px; width: 7px; height: 7px; pointer-events: none;
  border: solid #444; border-width: 0 1px 1px 0; transform: rotate(45deg);
}
.font { width: 152px; margin: 0 8px 0 1px; }
.size { width: 59px; }

.workspace { flex: 1; min-height: 0; display: flex; }
.editor { flex: 1; min-width: 0; display: flex; flex-direction: column; }
.formulabar { flex: none; height: 27px; display: flex; align-items: center; border-bottom: 1px solid #a0a0a0; }
.namebox { width: 171px; height: 26px; align-self: flex-start; }
.formulabar .dd { width: 13px; height: 24px; }
.fb { width: 24px; height: 24px; }
.fx { fill: #4d82b8; }
.fx text { font-family: Roboto, sans-serif; }
.formula { flex: 1; min-width: 0; height: 25px; align-self: flex-start; background: #fff; border: 1px solid #a0a0a0; border-top: 0; margin-left: 1px; padding-left: 4px; }
.expand { width: 19px; height: 24px; margin-right: 8px; }

.infobar { flex: none; height: 40px; display: flex; align-items: center; background: #bde5f8; border-bottom: 1px solid #004a8d; padding-left: 7px; }
.infobar p { flex: 1; margin: 0 0 0 9px; padding-bottom: 2px; }
.notes { width: 83px; height: 28px; background: #e1e1e1; border: 1px solid #adadad; padding-bottom: 2px; }
.dismiss { width: 41px; height: 28px; }

.gridarea { flex: 1; min-height: 0; display: flex; }
.cells { flex: 1; min-width: 0; overflow: hidden; background: #fff; }
.grid { width: 1949px; table-layout: fixed; border-spacing: 0; }
.grid th, .grid td { padding: 0; height: 21px; border: solid #c0c0c0; border-width: 0 1px 1px 0; }
.grid th { background: #efefef; border-color: #6b6b6b; font-weight: 400; line-height: 20px; }
.grid thead th { width: 106px; height: 22px; padding: 0 0 1px 2px; }
.grid thead th:first-child { width: 41px; }
.grid th.sel { background: #0078d7; color: #fff; font-weight: 700; border-color: #0078d7; }
.grid td.cursor { position: relative; box-shadow: inset 0 0 0 1px #000; border-color: #000; }
.cursor::after { content: ""; position: absolute; right: -3px; bottom: -3px; width: 5px; height: 5px; background: #000; }

.vscroll { flex: none; width: 21px; display: flex; flex-direction: column; padding-right: 1px; }
.vscroll button { height: 21px; }
.vsplit { height: 5px; background: linear-gradient(#000, #000) center / 11px 1px no-repeat #a0a0a0; }
.vtrack { flex: 1; padding-left: 1px; display: grid; grid-template-rows: 346fr 367fr; }
.vtrack span, .htrack span { background: #cdcdcd; }
.hscroll { flex: none; height: 20px; display: flex; padding: 0 21px 1px 0; }
.hscroll button { width: 20px; }
.htrack { flex: 1; display: grid; grid-template-columns: 852fr 955fr; }
.hsplit { width: 5px; margin-left: 1px; background: linear-gradient(#000, #000) center / 1px 11px no-repeat #a0a0a0; }
.tabs { flex: none; height: 25px; display: flex; align-items: center; padding-left: 5px; }
.nav { width: 25px; height: 24px; }
.add { width: 38px; height: 24px; }
.tab { width: 85px; height: 25px; background: #fff; border-bottom: 3px solid #656565; padding-bottom: 1px; }

.collapse { width: 7px; border: solid #a0a0a0; border-width: 0 1px 1px; align-self: stretch; background: #f4f4f4; margin-bottom: 2px; }
.collapse span { flex: none; width: 7px; height: 73px; background: #656565; display: flex; align-items: center; }
.sidebar { flex: none; width: 40px; display: flex; flex-direction: column; align-items: center; border-bottom: 1px solid #a0a0a0; gap: 3px; margin-bottom: 2px; }
.sidebar button { width: 32px; height: 32px; }
.sidebar .more { height: 38px; margin-bottom: 1px; border-bottom: 1px solid #dcdcdc; }
.sidebar .cur { border: 1px solid #a9a9a9; border-radius: 4px; }

.gadget { position: absolute; right: 0; top: 586px; width: 13px; height: 74px; background: #535969; border: 1px solid #2f3440; border-right: 0; border-radius: 5px 0 0 5px; padding: 8px 2px 8px 4px; }
.gadget span { display: block; width: 6px; height: 57px; background: repeating-linear-gradient(transparent 0 1px, #535969 1px 2px), linear-gradient(#30343e 64%, #9bd072 64%, #4fd0bd); }

.status { flex: none; height: 25px; border-top: 1px solid #a0a0a0; display: flex; padding: 2px 0; }
.status > span { flex: none; display: flex; align-items: center; justify-content: center; border-left: 1px solid #a0a0a0; }
.status .s-sheet { width: 359px; border-left: 0; justify-content: flex-start; padding-left: 11px; }
.status .s-sel { width: 292px; }
.status .s-style { width: 265px; justify-content: flex-start; padding-left: 9px; }
.status .s-lang { width: 306px; }
.status .s-blank { width: 69px; }
.status .s-ico { width: 30px; }
.status .s-sum { flex: 1; }
.status .s-zoom { width: 144px; }
.status .s-pct { width: 54px; padding-right: 2px; }
.s-zoom button { width: 12px; }
.s-zoom input { width: 98px; margin: 0 4px; height: 20px; appearance: none; background: linear-gradient(#797979, #797979) center / 100% 1px no-repeat; }
.s-zoom input::-webkit-slider-thumb { appearance: none; width: 4px; height: 10px; background: #656565; }

.taskbar { flex: none; height: 50px; display: flex; background: #1e321e; color: #fff; }
.sys { width: 60px; }
.apps { display: flex; margin-left: 3px; }
.apps button { width: 62px; border-bottom: 3px solid transparent; padding-top: 3px; }
.apps svg { width: 30px; height: 30px; }
.apps .active { background: #4b5c4b; border-color: #5cb85c; }
.apps .running { background: linear-gradient(#5cb85c, #5cb85c) bottom / 50px 3px no-repeat border-box; }
.tray { margin-left: auto; display: flex; }
.tray button { width: 30px; }
.tray svg { width: 20px; height: 20px; }
.tray .ime { font-size: 19px; width: 28px; }
.tray .pin { width: 45px; }
.pin span { width: 20px; height: 20px; background: #fff; color: #000; font-size: 15px; line-height: 18px; }
.tray .clock { width: 94px; flex-direction: column; gap: 3px; padding-bottom: 2px; }
.tray .note { width: 49px; }
.tray .note svg { margin-top: 2px; }
.peek { width: 17px; background: linear-gradient(#7a867a, #7a867a) 11px 0 / 1px 100% no-repeat; }
```
FILE: script.js
```js
// The last column and row only show as a sliver, so they carry no label.
const columns = [...'ABCDEFGHIJKLMNOPQ', ''];
const head = '<tr><th></th>' + columns.map((c, i) =>
  `<th scope="col"${i ? '' : ' class="sel"'}>${c}</th>`).join('') + '</tr>';
let body = '';
for (let r = 1; r <= 36; r++) {
  body += `<tr><th scope="row"${r === 1 ? ' class="sel"' : ''}>${r < 36 ? r : ''}</th>` +
    columns.map((c, i) => r === 1 && i === 0 ? '<td class="cursor"></td>' : '<td></td>').join('') + '</tr>';
}
document.querySelector('.grid thead').innerHTML = head;
document.querySelector('.grid tbody').innerHTML = body;
```
